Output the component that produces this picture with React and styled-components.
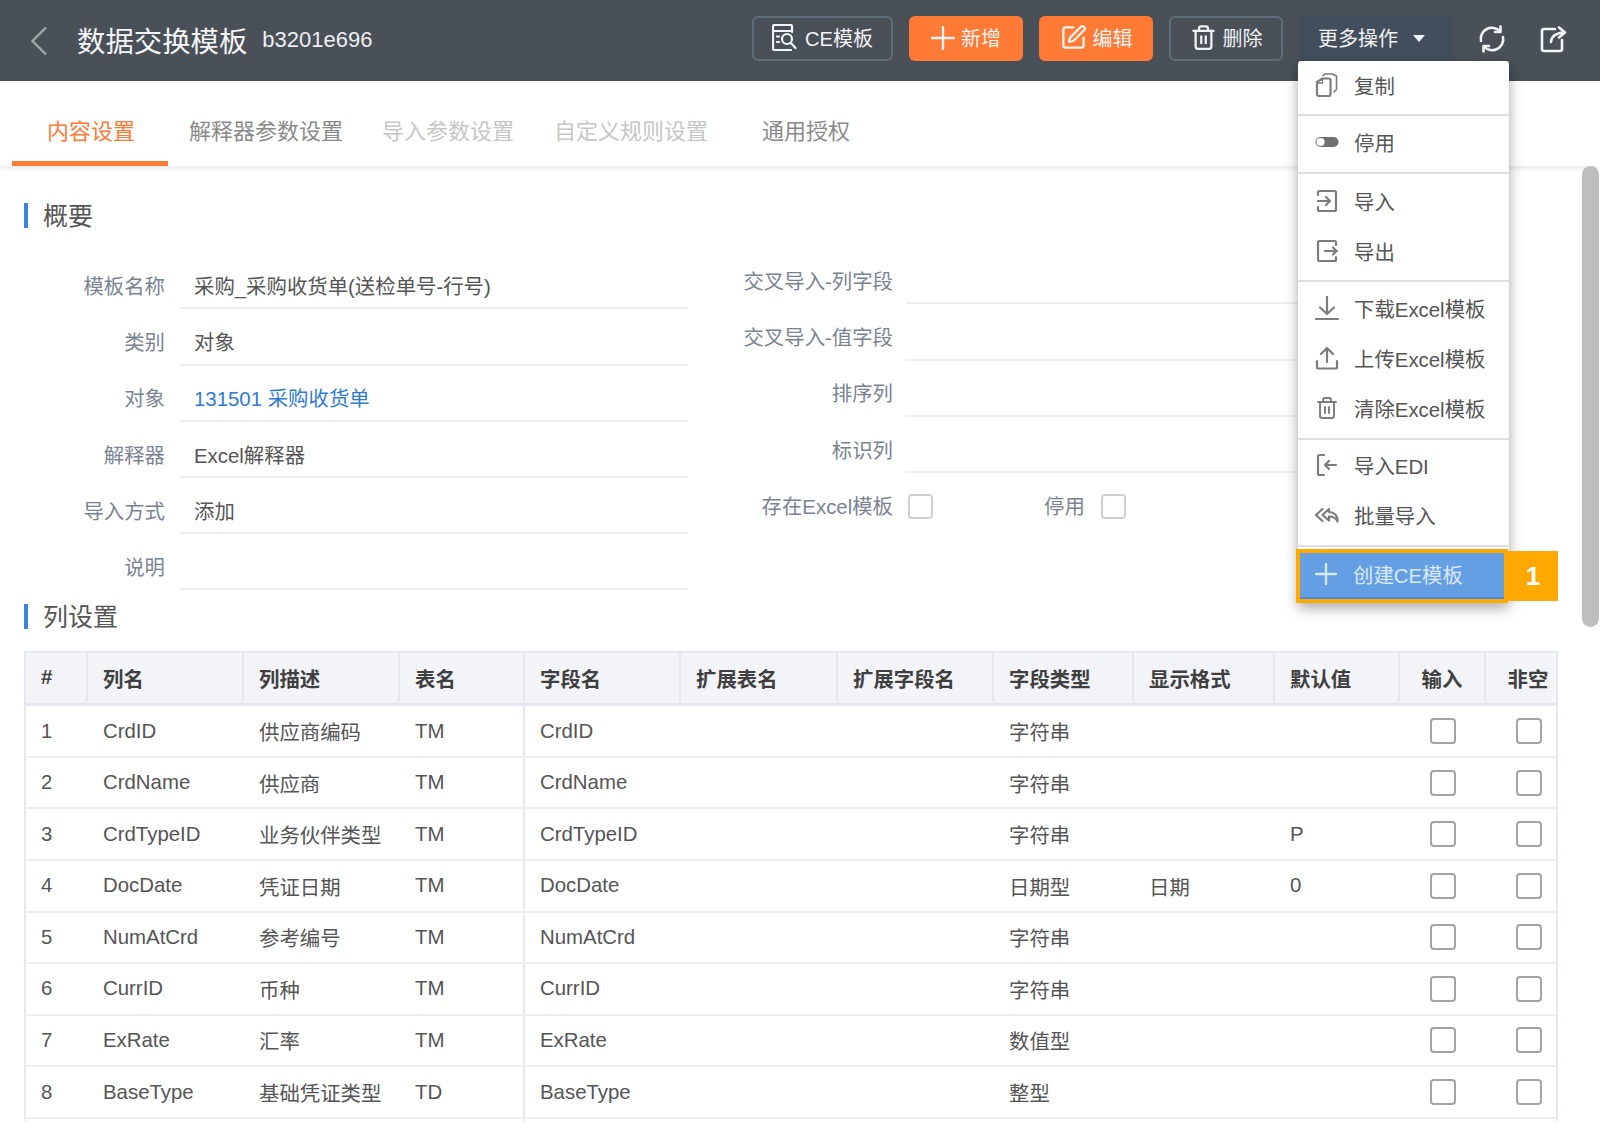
import React from 'react';
import styled, { createGlobalStyle } from 'styled-components';
import { SquarePen, Trash2 } from 'lucide-react';

const GlobalStyle = createGlobalStyle`
  html, body {
    margin: 0;
    padding: 0;
    background: #fff;
    overflow: hidden;
  }
  * { box-sizing: border-box; }
  body {
    font-family: "Liberation Sans", "Noto Sans CJK SC", sans-serif;
    font-size: 20.4px;
    color: #555;
  }
`;

const COLUMNS = '62px 156px 156px 125px 156px 157px 156px 140px 141px 125px 86px 86px';
const ORANGE = '#ff7a35';
const LINE = '#e6e8ef';

const Page = styled.div`
  width: 1600px;
  height: 1137px;
  overflow: hidden;
  display: flex;
  flex-direction: column;
`;

const TopBar = styled.header`
  height: 81px;
  flex: none;
  background: #4a5058;
  display: flex;
  align-items: center;
  padding: 0 32px 4px 30px;
`;

const BackIcon = styled.svg`
  width: 18px;
  height: 30px;
  margin-top: 4px;
  flex: none;
`;

const Title = styled.h1`
  margin: 2px 0 0 29px;
  font-size: 28.4px;
  font-weight: 400;
  color: #f4f5f6;
`;

const Code = styled.span`
  margin: 2px 0 0 15px;
  font-size: 22px;
  color: #eceef0;
`;

const Actions = styled.div`
  margin-left: auto;
  display: flex;
  align-items: center;
  gap: 16px;
`;

const ActionButton = styled.button`
  width: ${p => p.$width}px;
  height: 45px;
  padding: 0 0 2px;
  display: flex;
  align-items: center;
  justify-content: center;
  gap: ${p => p.$gap || 6}px;
  font: inherit;
  font-size: 20px;
  color: #f2f3f4;
  background: ${p => (p.$primary ? ORANGE : 'transparent')};
  border: ${p => (p.$primary ? 'none' : '2px solid #5f6d7b')};
  border-radius: 6px;
`;

const MoreWrap = styled.div`
  position: relative;
`;

const MoreButton = styled.button`
  width: 155px;
  height: 45px;
  padding: 0 0 3px 19px;
  display: flex;
  align-items: center;
  gap: 15px;
  font: inherit;
  font-size: 20px;
  color: #f2f3f4;
  background: #434e5c;
  border: none;
`;

const Caret = styled.i`
  width: 0;
  height: 0;
  margin-top: 3px;
  border-left: 6px solid transparent;
  border-right: 6px solid transparent;
  border-top: 7px solid #f2f3f4;
`;

const TopIcon = styled.svg`
  width: 28px;
  height: 28px;
  flex: none;
  margin-left: ${p => p.$offset}px;
`;

const Menu = styled.div`
  position: absolute;
  z-index: 5;
  top: 45px;
  left: -1px;
  width: 211px;
  background: #fff;
  border-radius: 3px;
  box-shadow: 0 5px 14px rgba(0, 0, 0, 0.35);
`;

const MenuGroup = styled.div`
  padding: ${p => p.$top}px 0 ${p => p.$bottom}px;
  border-bottom: 2px solid #dedede;
`;

const MenuItem = styled.div`
  height: 50px;
  padding: 0 0 2px 17px;
  display: flex;
  align-items: center;
  gap: 15px;
  font-size: 20.4px;
  color: #555;
  white-space: nowrap;

  svg {
    width: 24px;
    height: 24px;
    flex: none;
    color: #7c7c7c;
  }
`;

const CreateItem = styled.div`
  position: relative;
  width: 212px;
  height: 54px;
  margin: 2px 0 0 -2px;
  padding: 0 0 4px 15px;
  display: flex;
  align-items: center;
  gap: 16px;
  font-size: 20.4px;
  color: #dbe8f8;
  background: #649fe4;
  border: 4px solid #ffa800;
  box-shadow: inset 0 -2px 0 #4a8ae0;

  svg {
    width: 22px;
    height: 22px;
    flex: none;
    color: #dbe8f8;
  }
`;

const Badge = styled.span`
  position: absolute;
  top: -2px;
  left: 208px;
  width: 50px;
  height: 50px;
  display: flex;
  align-items: center;
  justify-content: center;
  font-size: 26px;
  font-weight: 700;
  color: #fff;
  background: #ffa800;
`;

const TabBar = styled.nav`
  height: 85px;
  flex: none;
  padding-left: 12px;
  display: flex;
  box-shadow: 0 2px 6px rgba(0, 0, 0, 0.1);
`;

const Tab = styled.div`
  height: 85px;
  padding: 36px ${p => p.$right}px 0 ${p => p.$left}px;
  font-size: 22px;
  line-height: 30px;
  white-space: nowrap;
  color: ${p => (p.$active ? ORANGE : p.$disabled ? '#c6c6c6' : '#8a8a8a')};
  border-bottom: 5px solid ${p => (p.$active ? ORANGE : 'transparent')};
`;

const Body = styled.div`
  flex: 1;
  min-height: 0;
  display: flex;
`;

const Main = styled.main`
  width: 1582px;
  flex: none;
  padding: 37px 0 0 24px;
`;

const ScrollThumb = styled.div`
  width: 17px;
  height: 461px;
  background: #bdbdbd;
  border-radius: 9px;
`;

const SectionTitle = styled.h2`
  height: 25px;
  margin: 0;
  padding: 0 0 3px 15px;
  display: flex;
  align-items: center;
  font-size: 25px;
  font-weight: 400;
  color: #555;
  border-left: 4px solid #3a84e0;
`;

const FormGrid = styled.div`
  display: flex;
  align-items: flex-start;
  height: 375.800px;
`;

const FormColumn = styled.div`
  width: ${p => p.$width}px;
  flex: none;
  margin-top: ${p => p.$top}px;
`;

const FormRow = styled.div`
  height: 56.2px;
  display: flex;
  gap: ${p => p.$gap}px;
`;

const FieldLabel = styled.label`
  width: ${p => p.$width}px;
  flex: none;
  padding-top: 18.7px;
  line-height: 30px;
  text-align: right;
  white-space: nowrap;
  color: #7a8491;
`;

const FieldValue = styled.div`
  flex: 1;
  padding: 18.7px 0 0 14px;
  line-height: 30px;
  white-space: nowrap;
  color: ${p => (p.$link ? '#2f7ad6' : '#555')};
  border-bottom: 2px solid #eeeeee;
`;

const FieldChecks = styled.div`
  flex: 1;
  padding: 20.7px 0 0 2px;
  display: flex;
  align-items: flex-start;
`;

const CheckBox = styled.span`
  display: block;
  width: ${p => (p.$form ? 25 : 26)}px;
  height: ${p => (p.$form ? 25 : 26)}px;
  flex: none;
  background: #fff;
  border: 2px solid ${p => (p.$form ? '#cfcfcf' : '#a3a3a3')};
  border-radius: 4px;
`;

const InlineLabel = styled.span`
  margin: -2px 16px 0 111px;
  line-height: 30px;
  color: #7a8491;
`;

const TableWrap = styled.div`
  width: 1534px;
  height: 470px;
  margin-top: 22.500px;
  overflow: hidden;
  border-left: 2px solid ${LINE};
  border-right: 2px solid ${LINE};
`;

const HeadRow = styled.div`
  width: 1546px;
  height: 55px;
  padding-bottom: 1px;
  display: grid;
  grid-template-columns: ${COLUMNS};
  font-weight: 700;
  color: #3f3f3f;
  background: #f2f4f8;
  border-top: 2px solid ${LINE};
  border-bottom: 3px solid ${LINE};
`;

const HeadCell = styled.div`
  padding: 0 ${p => (p.$center ? 0 : 15)}px;
  display: flex;
  align-items: center;
  justify-content: ${p => (p.$center ? 'center' : 'flex-start')};
  white-space: nowrap;
  border-right: 2px solid ${LINE};
`;

const DataRow = styled.div`
  width: 1546px;
  height: 51.57px;
  display: grid;
  grid-template-columns: ${COLUMNS};
  border-bottom: 2px solid #eceef3;
`;

const DataCell = styled.div`
  padding: 0 ${p => (p.$center ? 0 : 15)}px;
  padding-left: ${p => (p.$center ? 2 : 15)}px;
  display: flex;
  align-items: center;
  justify-content: ${p => (p.$center ? 'center' : 'flex-start')};
  white-space: nowrap;
  color: #555;
  border-right: ${p => (p.$divider ? `2px solid ${LINE}` : '2px solid transparent')};
`;

const Icon = ({ children }) => (
  <svg viewBox="0 0 24 24" fill="none" stroke="currentColor" strokeWidth="2.2" strokeLinecap="round" strokeLinejoin="round">
    {children}
  </svg>
);

const PlusIcon = ({ size = 24, width = 2.4 }) => (
  <svg width={size} height={size} viewBox="0 0 24 24" fill="none" stroke="currentColor" strokeWidth={width} strokeLinecap="round">
    <path d="M1 12h22M12 1v22" />
  </svg>
);

const CopyIcon = () => (
  <Icon>
    <path d="M2 9 7.500 5.500H14a1.500 1.500 0 0 1 1.500 1.500v14.500A1.500 1.500 0 0 1 14 23H4a2 2 0 0 1-2-2Z" />
    <path d="M7.500 5.500V10H2" strokeWidth="1.400" />
    <path d="M8 2.500 10 1h7l4.500 2v13.500L19 19" strokeWidth="1.600" />
  </Icon>
);

const ToggleIcon = () => (
  <svg viewBox="0 0 26 24">
    <rect x="0.500" y="6.500" width="25" height="11" rx="5.500" fill="#707070" />
    <circle cx="6" cy="12" r="4.400" fill="#fff" />
  </svg>
);

const ImportIcon = () => (
  <Icon>
    <path d="M3 6V3.500A1.500 1.500 0 0 1 4.500 2h15A1.500 1.500 0 0 1 21 3.500v17a1.500 1.500 0 0 1-1.500 1.500h-15A1.500 1.500 0 0 1 3 20.500V18" />
    <path d="M3 12h12M11 8l4 4-4 4" />
  </Icon>
);

const ExportIcon = () => (
  <Icon>
    <path d="M21 6V3.500A1.500 1.500 0 0 0 19.500 2h-15A1.500 1.500 0 0 0 3 3.500v17A1.500 1.500 0 0 0 4.500 22h15a1.500 1.500 0 0 0 1.500-1.500V18" />
    <path d="M10 12h12M18 8.500l3.500 3.500-3.500 3.500" />
  </Icon>
);

const DownloadIcon = () => (
  <Icon>
    <path d="M12 1v17M5 11.500l7 6.500 7-6.500M1 23h22" />
  </Icon>
);

const UploadIcon = () => (
  <Icon>
    <path d="M12 16V2M6 8l6-6 6 6M2 15v6a1.500 1.500 0 0 0 1.500 1.500h17A1.500 1.500 0 0 0 22 21v-6" />
  </Icon>
);

const EdiIcon = () => (
  <Icon>
    <path d="M9 2H4.500A1.500 1.500 0 0 0 3 3.500v17A1.500 1.500 0 0 0 4.500 22H9" />
    <path d="M21 12H10M14 8l-4 4 4 4" />
  </Icon>
);

const BatchIcon = () => (
  <Icon>
    <path d="M7.500 6 1 12l6.500 6" />
    <path d="M14 6 7.500 12 14 17.500v-4c4 0 7 1.500 8.500 5 .5-6-3.500-9.500-8.500-9.500Z" />
  </Icon>
);

const CeIcon = () => (
  <svg width="25" height="27" viewBox="0 0 25 27" fill="none" stroke="#f2f3f4" strokeWidth="2.200" strokeLinecap="round" strokeLinejoin="round">
    <path d="M20 8V2.500A1.500 1.500 0 0 0 18.500 1h-16A1.500 1.500 0 0 0 1 2.500v22A1.500 1.500 0 0 0 2.500 26H19" />
    <path d="M1 7h18M5 12.500h2M5 18h2" />
    <circle cx="15" cy="15" r="5" />
    <path d="M19 19l4.500 5" />
  </svg>
);

const RefreshIcon = () => (
  <TopIcon $offset={24} viewBox="0 0 28 28" fill="none" stroke="#f2f3f4" strokeWidth="2.600" strokeLinecap="round" strokeLinejoin="round">
    <path d="M3 16A11 11 0 0 1 22 6.500" />
    <path d="M25 12A11 11 0 0 1 6 21.500" />
    <path d="M22.500 1.500v5.500h-5.500M5.500 26.500V21H11" />
  </TopIcon>
);

const ShareIcon = () => (
  <TopIcon $offset={34} viewBox="0 0 28 28" fill="none" stroke="#f2f3f4" strokeWidth="2.600" strokeLinecap="round" strokeLinejoin="round">
    <path d="M15 4H4a2 2 0 0 0-2 2v18a2 2 0 0 0 2 2h16a2 2 0 0 0 2-2V15" />
    <path d="M11 17c.5-6 5-9 13-9.500M19 2.500l6 5-6 5" />
  </TopIcon>
);

const LEFT_FIELDS = [
  ['模板名称', '采购_采购收货单(送检单号-行号)'],
  ['类别', '对象'],
  ['对象', '131501 采购收货单', true],
  ['解释器', 'Excel解释器'],
  ['导入方式', '添加'],
  ['说明', ''],
];

const RIGHT_FIELDS = ['交叉导入-列字段', '交叉导入-值字段', '排序列', '标识列'];

const HEADERS = ['#', '列名', '列描述', '表名', '字段名', '扩展表名', '扩展字段名', '字段类型', '显示格式', '默认值'];

const ROWS = [
  ['1', 'CrdID', '供应商编码', 'TM', 'CrdID', '', '', '字符串', '', ''],
  ['2', 'CrdName', '供应商', 'TM', 'CrdName', '', '', '字符串', '', ''],
  ['3', 'CrdTypeID', '业务伙伴类型', 'TM', 'CrdTypeID', '', '', '字符串', '', 'P'],
  ['4', 'DocDate', '凭证日期', 'TM', 'DocDate', '', '', '日期型', '日期', '0'],
  ['5', 'NumAtCrd', '参考编号', 'TM', 'NumAtCrd', '', '', '字符串', '', ''],
  ['6', 'CurrID', '币种', 'TM', 'CurrID', '', '', '字符串', '', ''],
  ['7', 'ExRate', '汇率', 'TM', 'ExRate', '', '', '数值型', '', ''],
  ['8', 'BaseType', '基础凭证类型', 'TD', 'BaseType', '', '', '整型', '', ''],
];

const MENU_GROUPS = [
  { top: 0, bottom: 3, items: [[<CopyIcon />, '复制']] },
  { top: 2, bottom: 4, items: [[<ToggleIcon />, '停用']] },
  { top: 3, bottom: 3, items: [[<ImportIcon />, '导入'], [<ExportIcon />, '导出']] },
  {
    top: 2,
    bottom: 4,
    items: [
      [<DownloadIcon />, '下载Excel模板'],
      [<UploadIcon />, '上传Excel模板'],
      [<Trash2 strokeWidth={1.9} />, '清除Excel模板'],
    ],
  },
  { top: 1, bottom: 4, items: [[<EdiIcon />, '导入EDI'], [<BatchIcon />, '批量导入']] },
];

const TABS = [
  { label: '内容设置', left: 35, right: 33, active: true },
  { label: '解释器参数设置', left: 21, right: 21 },
  { label: '导入参数设置', left: 18, right: 20, disabled: true },
  { label: '自定义规则设置', left: 20, right: 21, disabled: true },
  { label: '通用授权', left: 33, right: 33 },
];

const App = () => {
  return (
    <Page>
      <GlobalStyle />
      <TopBar>
        <BackIcon viewBox="0 0 18 30" fill="none" stroke="#a2a6ab" strokeWidth="2.400">
          <path d="M16 1.500 2.500 15 16 28.500" />
        </BackIcon>
        <Title>数据交换模板</Title>
        <Code>b3201e696</Code>
        <Actions>
          <ActionButton $width={141} $gap={8}>
            <CeIcon />
            CE模板
          </ActionButton>
          <ActionButton $width={114} $primary>
            <PlusIcon />
            新增
          </ActionButton>
          <ActionButton $width={114} $primary>
            <SquarePen size={27} strokeWidth={2} />
            编辑
          </ActionButton>
          <ActionButton $width={114}>
            <Trash2 size={27} strokeWidth={2} />
            删除
          </ActionButton>
          <MoreWrap>
            <MoreButton>
              更多操作
              <Caret />
            </MoreButton>
            <Menu>
              {MENU_GROUPS.map((group, i) => (
                <MenuGroup key={i} $top={group.top} $bottom={group.bottom}>
                  {group.items.map(([icon, label]) => (
                    <MenuItem key={label}>
                      {icon}
                      {label}
                    </MenuItem>
                  ))}
                </MenuGroup>
              ))}
              <CreateItem>
                <PlusIcon width={2.600} />
                创建CE模板
                <Badge>1</Badge>
              </CreateItem>
            </Menu>
          </MoreWrap>
        </Actions>
        <RefreshIcon />
        <ShareIcon />
      </TopBar>

      <TabBar>
        {TABS.map(tab => (
          <Tab key={tab.label} $left={tab.left} $right={tab.right} $active={tab.active} $disabled={tab.disabled}>
            {tab.label}
          </Tab>
        ))}
      </TabBar>

      <Body>
        <Main>
          <SectionTitle>概要</SectionTitle>
          <FormGrid>
            <FormColumn $width={664} $top={25.3}>
              {LEFT_FIELDS.map(([label, value, link]) => (
                <FormRow key={label} $gap={15}>
                  <FieldLabel $width={141}>{label}</FieldLabel>
                  <FieldValue $link={link}>{value}</FieldValue>
                </FormRow>
              ))}
            </FormColumn>
            <FormColumn $width={618} $top={20.3}>
              {RIGHT_FIELDS.map(label => (
                <FormRow key={label} $gap={13}>
                  <FieldLabel $width={205}>{label}</FieldLabel>
                  <FieldValue />
                </FormRow>
              ))}
              <FormRow $gap={13}>
                <FieldLabel $width={205}>存在Excel模板</FieldLabel>
                <FieldChecks>
                  <CheckBox $form />
                  <InlineLabel>停用</InlineLabel>
                  <CheckBox $form />
                </FieldChecks>
              </FormRow>
            </FormColumn>
          </FormGrid>

          <SectionTitle>列设置</SectionTitle>
          <TableWrap>
            <HeadRow>
              {HEADERS.map(title => (
                <HeadCell key={title}>{title}</HeadCell>
              ))}
              <HeadCell $center>输入</HeadCell>
              <HeadCell $center>非空</HeadCell>
            </HeadRow>
            {ROWS.map(row => (
              <DataRow key={row[0]}>
                {row.map((value, i) => (
                  <DataCell key={i} $divider={i === 3}>{value}</DataCell>
                ))}
                <DataCell $center><CheckBox /></DataCell>
                <DataCell $center><CheckBox /></DataCell>
              </DataRow>
            ))}
            <DataRow>
              {HEADERS.map((title, i) => (
                <DataCell key={title} $divider={i === 3} />
              ))}
            </DataRow>
          </TableWrap>
        </Main>
        <ScrollThumb />
      </Body>
    </Page>
  );
};

export default App;
